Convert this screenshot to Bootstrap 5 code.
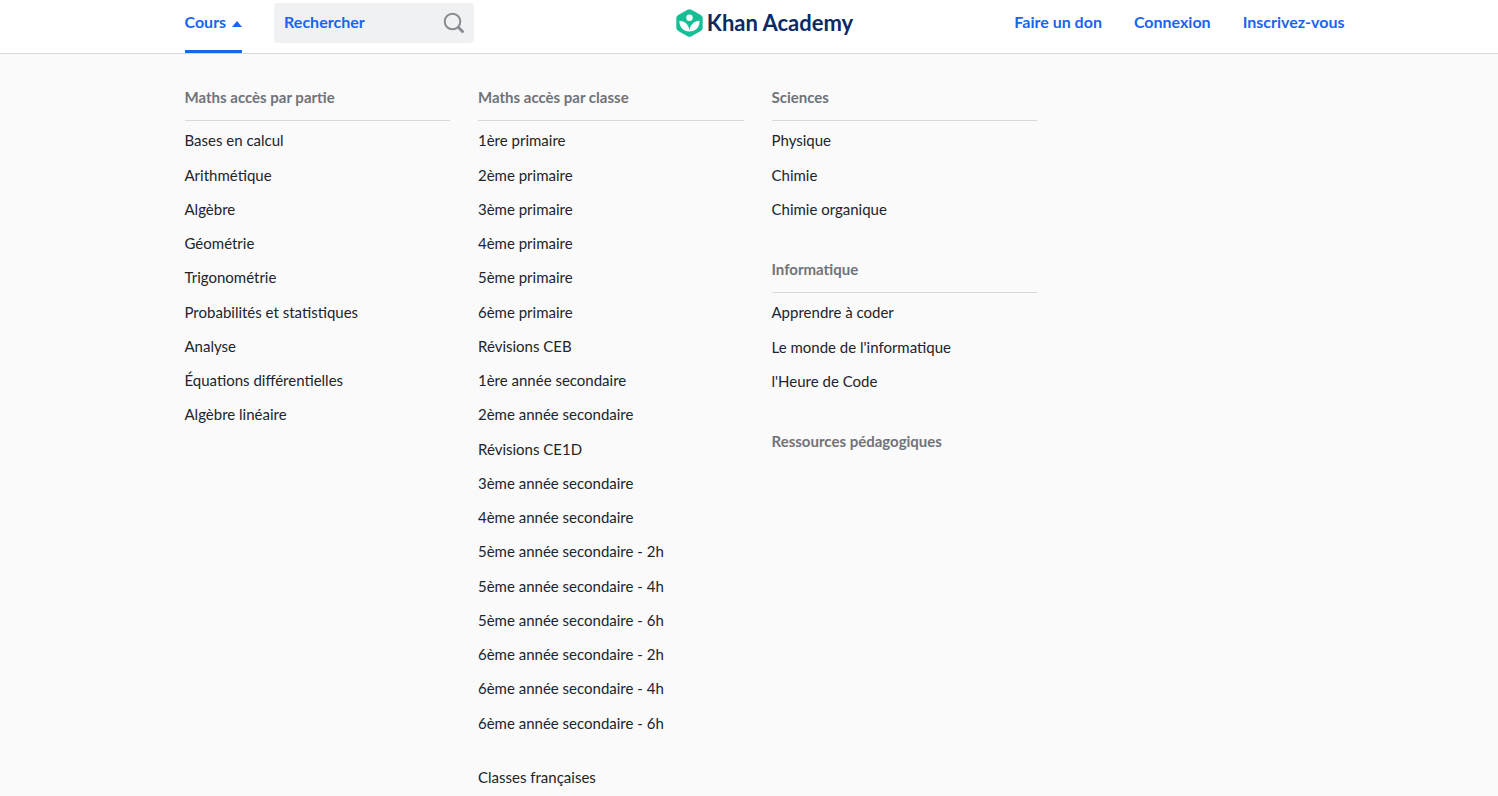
<!DOCTYPE html>
<html lang="fr">
<head>
<meta charset="utf-8">
<meta name="viewport" content="width=device-width, initial-scale=1">
<title>Khan Academy</title>
<link href="https://cdn.jsdelivr.net/npm/bootstrap@5.3.0/dist/css/bootstrap.min.css" rel="stylesheet">
<style>
body { font-family: Lato, sans-serif; font-size: 15px; line-height: 20px; color: #21242c; background: #fafafa; }
a { text-decoration: none; }
.page-width { max-width: 1191px; padding-left: 31px; }
.site-header { border-bottom: 1px solid #d6d8da; }
.header-bar { display: grid; grid-template-columns: 1fr auto 1fr; min-height: 53px; }
.header-link { color: #1865f2; font-size: 16px; font-weight: 700; line-height: 20px; }
.header-links { gap: 32px; padding-top: 12px; }
.courses-btn { border: 0; border-bottom: 3px solid #1865f2; background: none; padding: 12px 0 18px; gap: 6px; }
.courses-btn svg { margin-top: 4px; }
.search-box { width: 200px; height: 40px; margin: 3px 0 0 32px; padding: 0 9px 0 10px; background: #f0f1f3; border-radius: 4px; }
.search-box input { min-width: 0; border: 0; background: none; outline-offset: 2px; padding: 0 0 2px; }
.search-box input::placeholder { color: #1865f2; opacity: 1; }
.search-box button { border: 0; background: none; padding: 0; line-height: 0; }
.brand { gap: 4px; padding-top: 9px; color: #0a2a66; font-size: 22px; font-weight: 700; line-height: 28px; }
.course-row { --bs-gutter-x: 28px; margin-right: 0; padding-top: 33px; }
.group-title { margin: 0; font-size: 15px; font-weight: 700; line-height: 20px; padding-bottom: 13px; }
.group-title a { color: #717378; }
.course-group { margin-bottom: 33px; }
.course-group ul { border-top: 1px solid #d6d8da; padding-top: 2px; }
.course-group li { padding: 7px 0; }
.course-group li:nth-child(4n+1) { padding-bottom: 8px; }
.course-group li a, .more-link { color: #21242c; }
.more-link { display: block; margin-top: -6px; padding-bottom: 20px; }
</style>
</head>
<body>
<header class="site-header bg-white">
  <div class="page-width header-bar container-fluid pe-0">
    <div class="d-flex align-items-start">
      <button class="courses-btn header-link d-flex align-items-center" type="button" aria-expanded="true" aria-controls="courses">Cours
        <svg width="10" height="6" viewBox="0 0 10 6" aria-hidden="true"><path d="M0 6L5 0l5 6z" fill="#1865f2"/></svg>
      </button>
      <form class="search-box d-flex align-items-center" role="search">
        <input class="header-link flex-grow-1" type="search" placeholder="Rechercher" aria-label="Rechercher">
        <button type="submit" aria-label="Lancer la recherche">
          <svg width="22" height="22" viewBox="0 0 22 22" fill="none" stroke="#888b91" aria-hidden="true"><circle cx="9.500" cy="9.500" r="7.800" stroke-width="2"/><path d="M15.500 15.500L19.500 19.500" stroke-width="3" stroke-linecap="round"/></svg>
        </button>
      </form>
    </div>
    <a class="brand d-flex align-items-start" href="#">
      <svg width="27" height="29" viewBox="0 0 27 29" aria-hidden="true">
        <path d="M11.500 .8Q13.500-.300 15.500 .8L24.800 6.100Q26.700 7.200 26.700 9.300V18.700Q26.700 20.800 24.800 21.900L15.500 27.200Q13.500 28.300 11.500 27.200L2.200 21.900Q.3 20.800.3 18.700V9.300Q.3 7.200 2.200 6.100Z" fill="#14bf96"/>
        <circle cx="13.500" cy="8.700" r="3.200" fill="#fff"/>
        <path d="M3.400 11.700C8.700 11.700 12.900 15.500 13.500 21.800C14.100 15.500 18.300 11.700 23.600 11.700C23.900 18 19.500 22.500 13.500 22.500S3.100 18 3.400 11.700Z" fill="#fff"/>
      </svg>
      <span>Khan Academy</span>
    </a>
    <nav class="header-links d-flex justify-content-end align-items-start" aria-label="Compte">
      <a class="header-link" href="#">Faire un don</a>
      <a class="header-link" href="#">Connexion</a>
      <a class="header-link" href="#">Inscrivez-vous</a>
    </nav>
  </div>
</header>
<main class="page-width container-fluid pe-0" id="courses">
  <div class="row course-row">
    <div class="col-3">
      <section class="course-group">
        <h2 class="group-title"><a href="#">Maths accès par partie</a></h2>
        <ul class="list-unstyled mb-0">
          <li><a href="#">Bases en calcul</a></li>
          <li><a href="#">Arithmétique</a></li>
          <li><a href="#">Algèbre</a></li>
          <li><a href="#">Géométrie</a></li>
          <li><a href="#">Trigonométrie</a></li>
          <li><a href="#">Probabilités et statistiques</a></li>
          <li><a href="#">Analyse</a></li>
          <li><a href="#">Équations différentielles</a></li>
          <li><a href="#">Algèbre linéaire</a></li>
        </ul>
      </section>
    </div>
    <div class="col-3">
      <section class="course-group">
        <h2 class="group-title"><a href="#">Maths accès par classe</a></h2>
        <ul class="list-unstyled mb-0">
          <li><a href="#">1ère primaire</a></li>
          <li><a href="#">2ème primaire</a></li>
          <li><a href="#">3ème primaire</a></li>
          <li><a href="#">4ème primaire</a></li>
          <li><a href="#">5ème primaire</a></li>
          <li><a href="#">6ème primaire</a></li>
          <li><a href="#">Révisions CEB</a></li>
          <li><a href="#">1ère année secondaire</a></li>
          <li><a href="#">2ème année secondaire</a></li>
          <li><a href="#">Révisions CE1D</a></li>
          <li><a href="#">3ème année secondaire</a></li>
          <li><a href="#">4ème année secondaire</a></li>
          <li><a href="#">5ème année secondaire - 2h</a></li>
          <li><a href="#">5ème année secondaire - 4h</a></li>
          <li><a href="#">5ème année secondaire - 6h</a></li>
          <li><a href="#">6ème année secondaire - 2h</a></li>
          <li><a href="#">6ème année secondaire - 4h</a></li>
          <li><a href="#">6ème année secondaire - 6h</a></li>
        </ul>
      </section>
      <a class="more-link" href="#">Classes françaises</a>
    </div>
    <div class="col-3">
      <section class="course-group">
        <h2 class="group-title"><a href="#">Sciences</a></h2>
        <ul class="list-unstyled mb-0">
          <li><a href="#">Physique</a></li>
          <li><a href="#">Chimie</a></li>
          <li><a href="#">Chimie organique</a></li>
        </ul>
      </section>
      <section class="course-group">
        <h2 class="group-title"><a href="#">Informatique</a></h2>
        <ul class="list-unstyled mb-0">
          <li><a href="#">Apprendre à coder</a></li>
          <li><a href="#">Le monde de l'informatique</a></li>
          <li><a href="#">l'Heure de Code</a></li>
        </ul>
      </section>
      <h2 class="group-title"><a href="#">Ressources pédagogiques</a></h2>
    </div>
  </div>
</main>
<script src="https://cdn.jsdelivr.net/npm/bootstrap@5.3.0/dist/js/bootstrap.bundle.min.js"></script>
</body>
</html>
